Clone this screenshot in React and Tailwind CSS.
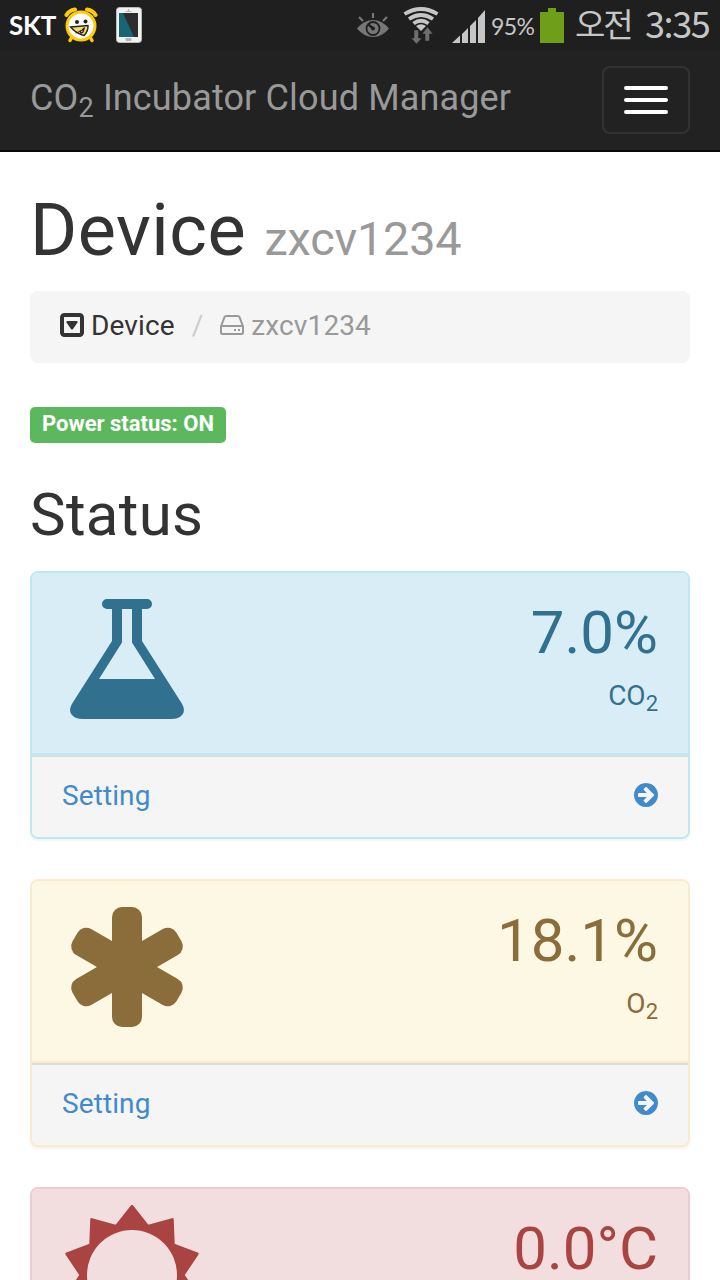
import React from "react";

function AlarmIcon() {
  return (
    <svg className="ml-[7px] h-[36px] w-[34px]" viewBox="0 0 34 36">
      <path d="M2.500 8 Q5 3.500 11 2.500 M31.500 8 Q29 3.500 23 2.500" stroke="#ffcb08" strokeWidth="4" strokeLinecap="round" fill="none" />
      <path d="M8 30 L6 33.500 M26 30 L28 33.500" stroke="#ffcb08" strokeWidth="3.500" strokeLinecap="round" />
      <circle cx="17" cy="19" r="14" fill="#fff" stroke="#ffcb08" strokeWidth="3" />
      <circle cx="13" cy="15" r="2" fill="#222" />
      <circle cx="21.500" cy="14.500" r="2" fill="#222" />
      <path d="M6.500 20 L24 18.500 Q24.500 24 20 28.500 Q13 27 6.500 20Z" fill="#fdd76b" stroke="#222" strokeWidth="1.400" />
      <path d="M11.500 26 Q17 25 20.500 20.500 L19 25 L16.500 26.500 M16 23.500 L17 26.500 M18 22 L19.500 24" fill="none" stroke="#222" strokeWidth="1.200" />
    </svg>
  );
}

function PhoneIcon() {
  return (
    <svg className="ml-[18px] h-[36px] w-[26px]" viewBox="0 0 26 36">
      <rect x="0.500" y="0.500" width="25" height="35" rx="3" fill="#f1f2f0" stroke="#b9bcbb" />
      <path d="M9.500 4.500h6M12.500 2v2" stroke="#b5b5b5" strokeWidth="1.200" />
      <rect x="3" y="6" width="19" height="24" fill="#2d2d2d" />
      <path d="M3 6h4l11 24H3z" fill="#176575" />
      <rect x="9.500" y="31" width="6" height="3" rx="1" fill="#b5b5b5" />
    </svg>
  );
}

function EyeIcon() {
  return (
    <svg className="h-[24px] w-[32px]" viewBox="0 0 32 24">
      <path d="M0 15.500 Q7 7 16 7 T32 15.500 Q25 24 16 24 T0 15.500Z" fill="#777" />
      <circle cx="16" cy="15.500" r="6.500" fill="none" stroke="#1f1f1f" strokeWidth="1.800" />
      <path d="M16 15.500 L11.500 11.500" stroke="#1f1f1f" strokeWidth="2.500" />
      <path d="M16 0v5M2 4l4 4M30 4l-4 4" stroke="#777" strokeWidth="2.200" />
      <circle cx="16" cy="15.500" r="2" fill="#1f1f1f" />
    </svg>
  );
}

function WifiIcon() {
  return (
    <svg className="ml-[14px] h-[37px] w-[36px]" viewBox="0 0 36 37">
      <g fill="none" stroke="#c6c6c6" strokeWidth="3.800">
        <path d="M1.500 7 Q18 -3 34.500 7" />
        <path d="M6 12 Q18 4 30 12" />
        <path d="M10.500 16.500 Q18 11 25.500 16.500" />
      </g>
      <path d="M13 19 Q18 15.500 23 19 L18 24Z" fill="#c6c6c6" />
      <path d="M11 23h4.500v8H19l-5.500 6L8 31h3z" fill="#6e6e6e" stroke="#1f1f1f" strokeWidth="0.500" />
      <path d="M22 34h4.500v-7H30l-5.500-7-5.500 7h3z" fill="#6e6e6e" stroke="#1f1f1f" strokeWidth="0.500" />
    </svg>
  );
}

function SignalIcon() {
  return (
    <svg className="mt-[3px] ml-[13px] h-[34px] w-[34px]" viewBox="0 0 34 34" fill="#c6c6c6">
      <path d="M0 33L8 25.500V33zM10 24L16 18V33H10zM18 16L24 10V33H18zM26 8L33 0V33H26z" />
    </svg>
  );
}

function StatusBar() {
  return (
    <div className="flex h-[50px] shrink-0 items-center bg-[#1f1f1f] text-[#c6c6c6]">
      <span className="ml-[9px] w-[48px] whitespace-nowrap font-[Lato,sans-serif] text-[26px] font-bold leading-[50px] tracking-[-0.2px] text-white">SKT</span>
      <AlarmIcon />
      <PhoneIcon />
      <div className="ml-auto flex w-[363px] shrink-0 items-center">
        <EyeIcon />
        <WifiIcon />
        <SignalIcon />
        <span className="ml-[5px] mt-[2px] w-[44px] whitespace-nowrap font-[Lato,sans-serif] text-[23px] leading-[48px] tracking-[-0.6px]">95%</span>
        <svg className="ml-[5px] mt-[1px] h-[35px] w-[24px]" viewBox="0 0 24 35">
          <path d="M8 0h8v4h8v31H0V4h8z" fill="#6f9e18" />
        </svg>
        <span className="ml-[11px] mb-[4px] w-[59px] whitespace-nowrap font-['Noto_Sans_CJK_KR',sans-serif] text-[33px] leading-[44px] tracking-[-2px]">오전</span>
        <span className="ml-[11px] mb-[5px] whitespace-nowrap font-['Noto_Sans_CJK_KR',sans-serif] text-[36px] leading-[45px] tracking-[-1.4px]">3:35</span>
      </div>
    </div>
  );
}

function Navbar() {
  return (
    <nav className="flex h-[102px] shrink-0 items-start justify-between border-b-2 border-[#080808] bg-[#222] px-[30px]">
      <div className="mt-[28px] whitespace-nowrap text-[36px] leading-[40px] tracking-[0.14px] text-[#999]">
        CO<sub className="text-[27px]">2</sub> Incubator Cloud Manager
      </div>
      <button className="mt-[16px] flex h-[68px] w-[88px] flex-col items-center justify-center gap-[8px] rounded-lg border-2 border-[#333]">
        <span className="h-[4px] w-[44px] rounded-[2px] bg-white" />
        <span className="h-[4px] w-[44px] rounded-[2px] bg-white" />
        <span className="h-[4px] w-[44px] rounded-[2px] bg-white" />
      </button>
    </nav>
  );
}

function FlaskIcon() {
  return (
    <svg className="h-[120px] w-[130px]" viewBox="0 0 130 120">
      <path
        fill="#31708f"
        fillRule="evenodd"
        d="M45 0H85a5 5 0 0 1 0 10H80V42L119.500 104Q124 111 120.500 115.500T109 120H21Q13 120 9.500 115.500T10.500 104L50 42V10H45a5 5 0 0 1 0-10ZM60 10V43.500L37 80H93L70 43.500V10Z"
      />
    </svg>
  );
}

function AsteriskIcon() {
  return (
    <svg className="h-[120px] w-[130px]" viewBox="0 0 130 120" fill="#8a6d3b">
      <rect x="50" y="0" width="30" height="120" rx="10" />
      <rect x="50" y="0" width="30" height="120" rx="10" transform="rotate(60 65 60)" />
      <rect x="50" y="0" width="30" height="120" rx="10" transform="rotate(120 65 60)" />
    </svg>
  );
}

const sunPoints = Array.from({ length: 20 }, (_, i) => {
  const radius = i % 2 ? 51 : 68.5;
  const angle = (i * Math.PI) / 10;
  return `${70 + radius * Math.sin(angle)} ${70 - radius * Math.cos(angle)}`;
}).join("L");

function SunIcon() {
  return (
    <svg className="-mt-[10px] h-[140px] w-[140px]" viewBox="0 0 140 140">
      <path d={`M${sunPoints}Z`} fill="#a94442" stroke="#a94442" strokeWidth="3" strokeLinejoin="round" />
      <circle cx="70" cy="70" r="45" fill="#f2dede" />
    </svg>
  );
}

function ArrowCircle() {
  return (
    <svg className="h-[24px] w-[24px]" viewBox="128 128 1536 1536" fill="#428bca">
      <path d="M1413 896q0-27-18-45l-91-91-362-362q-18-18-45-18t-45 18l-91 91q-18 18-18 45t18 45l189 189h-502q-26 0-45 19t-19 45v128q0 26 19 45t45 19h502l-189 189q-18 18-18 45t18 45l91 91q18 18 45 18t45-18l362-362 91-91q18-18 18-45zm251 0q0 209-103 385.500t-279.500 279.500-385.500 103-385.500-103-279.500-279.500-103-385.500 103-385.500 279.500-279.500 385.500-103 385.500 103 279.500 279.500 103 385.500z" />
    </svg>
  );
}

function Panel({ icon, value, label, action, frame, heading }) {
  return (
    <section className={`mb-[40px] flex h-[268px] shrink-0 flex-col overflow-hidden rounded-lg border-2 shadow-[0_2px_2px_rgba(0,0,0,0.05)] ${frame}`}>
      <div className={`flex h-[182px] items-start justify-between border-b-2 px-[30px] ${heading}`}>
        <div className="mt-[26px]">{icon}</div>
        <div className="mt-[25px] text-right">
          <div className="text-[60px] leading-[70px]">{value}</div>
          {label && <div className="mt-[8px] h-[40px] text-[28px] leading-[40px]">{label}</div>}
        </div>
      </div>
      {action && (
        <div className="flex h-[82px] items-start justify-between border-t-2 border-[#ddd] bg-[#f5f5f5] px-[30px] text-[#428bca]">
          <span className="mt-[19px] text-[28px] leading-[40px] tracking-[0.1px]">{action}</span>
          <div className="mt-[26px]">
            <ArrowCircle />
          </div>
        </div>
      )}
    </section>
  );
}

export default function App() {
  return (
    <div className="flex h-[1280px] w-[720px] flex-col overflow-hidden bg-white font-[Roboto,sans-serif] text-[#333]">
      <StatusBar />
      <Navbar />
      <main className="flex flex-col px-[30px]">
        <h1 className="mt-[39px] whitespace-nowrap text-[72px] leading-[79px] tracking-[0.5px]">
          Device <small className="text-[46.8px] leading-none tracking-[-0.2px] text-[#999]">zxcv1234</small>
        </h1>
        <div className="mt-[21px] flex h-[72px] items-start rounded-lg bg-[#f5f5f5] px-[30px] text-[28px] leading-[40px] tracking-[0.12px]">
          <svg className="mt-[22px] h-[24px] w-[24px]" viewBox="0 0 24 24">
            <rect x="2" y="2" width="20" height="20" rx="2.500" fill="none" stroke="#333" strokeWidth="4" />
            <path d="M7 8h10q1 .5 .5 1.500L13 16q-1 1-2 0L6.500 9.500Q6 8.500 7 8z" fill="#333" />
          </svg>
          <span className="ml-[7px] mt-[15px]">Device</span>
          <span className="ml-[17px] mt-[15px] text-[#ccc]">/</span>
          <svg className="ml-[17px] mt-[24px] h-[20px] w-[24px]" viewBox="0 0 24 20" fill="none" stroke="#999" strokeWidth="2">
            <path d="M1 11.500L4.500 2.200Q5 1 6.300 1H17.700Q19 1 19.500 2.200L23 11.500V17.500Q23 19 21.500 19H2.500Q1 19 1 17.500ZM1 11H23" />
            <path d="M14 15h2M18 15h2" />
          </svg>
          <span className="ml-[7px] mt-[15px] text-[#999]">zxcv1234</span>
        </div>
        <div className="mt-[44px] flex h-[36px] w-[196px] items-start justify-center whitespace-nowrap rounded-[5px] bg-[#5cb85c] text-[22px] font-bold leading-[34px] text-white">
          Power status: ON
        </div>
        <h2 className="mb-[23px] mt-[39px] text-[60px] leading-[66px] tracking-[0.3px]">Status</h2>
        <Panel
          icon={<FlaskIcon />}
          value="7.0%"
          label={<>CO<sub className="text-[22px]">2</sub></>}
          action="Setting"
          frame="border-[#bce8f1]"
          heading="border-[#bce8f1] bg-[#d9edf7] text-[#31708f]"
        />
        <Panel
          icon={<AsteriskIcon />}
          value="18.1%"
          label={<>O<sub className="text-[22px]">2</sub></>}
          action="Setting"
          frame="border-[#faebcc]"
          heading="border-[#faebcc] bg-[#fcf8e3] text-[#8a6d3b]"
        />
        <Panel
          icon={<SunIcon />}
          value="0.0°C"
          frame="border-[#ebccd1]"
          heading="border-[#ebccd1] bg-[#f2dede] text-[#a94442]"
        />
      </main>
    </div>
  );
}
